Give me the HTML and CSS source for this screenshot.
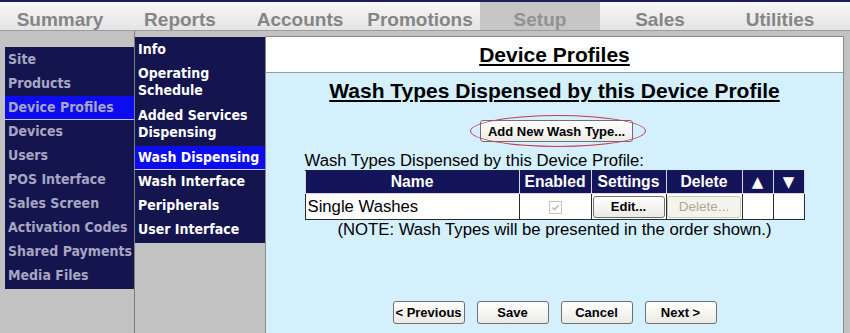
FILE: index.html
```html
<!DOCTYPE html>
<html lang="en">
<head>
  <meta charset="UTF-8" />
  <title>Device Profiles - Setup</title>
<link rel="stylesheet" href="styles.css">
</head>
<body>

<div class="topbar">
  <div class="tab">Summary</div>
  <div class="tab">Reports</div>
  <div class="tab">Accounts</div>
  <div class="tab">Promotions</div>
  <div class="tab active">Setup</div>
  <div class="tab">Sales</div>
  <div class="tab">Utilities</div>
</div>

<div class="page">
  <div class="nav-col">
    <ul class="nav">
      <li>Site</li>
      <li>Products</li>
      <li class="on">Device Profiles</li>
      <li>Devices</li>
      <li>Users</li>
      <li>POS Interface</li>
      <li>Sales Screen</li>
      <li>Activation Codes</li>
      <li>Shared Payments</li>
      <li>Media Files</li>
    </ul>
  </div>

  <div class="sub-col">
    <ul class="nav subnav">
      <li>Info</li>
      <li class="two">Operating<br>Schedule</li>
      <li class="two">Added Services<br>Dispensing</li>
      <li class="on">Wash Dispensing</li>
      <li>Wash Interface</li>
      <li>Peripherals</li>
      <li>User Interface</li>
    </ul>
  </div>

  <div class="main">
    <div class="main-head"><h1>Device Profiles</h1></div>
    <div class="main-body">
      <h2>Wash Types Dispensed by this Device Profile</h2>

      <div class="add-row">
        <span class="add-wrap">
          <button class="btn btn-add">Add New Wash Type...</button>
          <span class="ring"></span>
        </span>
      </div>

      <div class="list">
        <div class="list-label">Wash Types Dispensed by this Device Profile:</div>
        <table class="wash-table">
          <colgroup>
            <col style="width:214px"><col style="width:72px"><col style="width:75px">
            <col style="width:76px"><col style="width:31px"><col style="width:31px">
          </colgroup>
          <thead>
            <tr><th>Name</th><th>Enabled</th><th>Settings</th><th>Delete</th><th class="arrow">&#9650;</th><th class="arrow">&#9660;</th></tr>
          </thead>
          <tbody>
            <tr>
              <td class="name">Single Washes</td>
              <td><span class="chk"><svg width="11" height="11" viewBox="0 0 11 11"><path d="M2.5 5.5 L4.5 7.5 L8.5 3.2" fill="none" stroke="#b9b9b9" stroke-width="1.6"/></svg></span></td>
              <td><button class="btn btn-edit">Edit...</button></td>
              <td><button class="btn btn-off" disabled>Delete...</button></td>
              <td></td>
              <td></td>
            </tr>
          </tbody>
        </table>
      </div>

      <p class="note">(NOTE: Wash Types will be presented in the order shown.)</p>

      <div class="wizard">
        <button class="btn">&lt; Previous</button>
        <button class="btn">Save</button>
        <button class="btn">Cancel</button>
        <button class="btn">Next &gt;</button>
      </div>
    </div>
  </div>
</div>

</body>
</html>
```

FILE: styles.css
```css
:root {
  --navy: #14144e;
  --hilite: #0c0cee;
  --sky: #d4f0fc;
  --frame: #8a8a8a;
}

body {
  margin: 0;
  height: 333px;
  overflow: hidden;
  background: #c2c2c2;
  font-family: "Liberation Sans", Arial, sans-serif;
  color: #000;
}

/* top tabs */
.topbar {
  display: flex;
  height: 31px;
  box-sizing: border-box;
  border-top: 2px solid #1e1e5a;
  border-bottom: 1px solid #9c9c9c;
  background: linear-gradient(#f7f7f7, #e4e4e4);
}

.tab {
  width: 120px;
  box-sizing: border-box;
  padding-top: 7px;
  line-height: 21px;
  text-align: center;
  font-size: 19px;
  font-weight: bold;
  color: #858585;
}

.tab.active {
  background: #c6c6c6;
  color: #929292;
}

/* columns */
.page {
  display: flex;
  height: 302px;
}

.nav-col {
  width: 129px;
  margin-left: 5px;
  padding-top: 16px;
}

.sub-col {
  width: 130px;
  padding-top: 6px;
  border-left: 1px solid #7e7e7e;
}

.nav {
  list-style: none;
  margin: 0;
  padding: 1px 0;
  background: var(--navy);
}

.nav li {
  padding: 3px 0 3px 3px;
  line-height: 17px;
  border-bottom: 1px solid var(--navy);
  font-family: "DejaVu Sans Condensed", "DejaVu Sans", sans-serif;
  font-stretch: condensed;
  font-size: 14px;
  font-weight: bold;
  color: #a6a6c2;
  white-space: nowrap;
}

.nav li.on {
  background: var(--hilite);
  border-bottom-color: #c6c6e6;
}

.subnav li {
  color: #fff;
}

.subnav li.two {
  padding-bottom: 4px;
}

/* main panel */
.main {
  width: 577px;
  margin-top: 5px;
  border: 1px solid var(--frame);
  border-bottom: none;
  background: var(--sky);
}

.main-head {
  height: 35px;
  background: #fff;
  border-bottom: 1px solid #9a9a9a;
}

h1, h2 {
  margin: 0;
  font-size: 21px;
  font-weight: bold;
  text-align: center;
  text-decoration: underline;
  text-decoration-thickness: 2px;
  text-underline-offset: 2px;
}

h1 { line-height: 35px; }

.main-body {
  padding-top: 6px;
  text-align: center;
}

h2 { line-height: 24px; }

.btn {
  height: 23px;
  padding: 0;
  font-family: "Liberation Sans", Arial, sans-serif;
  font-size: 13px;
  font-weight: bold;
  color: #000;
  border: 1px solid #6f6f6f;
  border-radius: 3px;
  background: linear-gradient(#ffffff, #ebeae4);
  white-space: nowrap;
}

.add-row {
  display: flex;
  justify-content: center;
  padding-left: 4px;
  margin-top: 17px;
  height: 22px;
}

.add-wrap {
  position: relative;
  display: block;
}

.btn-add {
  display: block;
  width: 153px;
  height: 22px;
}

.ring {
  position: absolute;
  left: -10px;
  top: -5px;
  width: 176px;
  height: 32px;
  box-sizing: border-box;
  border: 1px solid #c83a56;
  border-radius: 50%;
}

.list {
  width: 500px;
  margin: 10px auto 0;
  text-align: left;
}

.list-label {
  font-size: 16.7px;
  line-height: 18px;
}

.wash-table {
  width: 500px;
  table-layout: fixed;
  border-collapse: collapse;
  border: 1px solid #1c1c4c;
  font-size: 16.7px;
}

.wash-table th {
  height: 22px;
  padding: 0;
  text-align: center;
  background: #14145a;
  color: #fff;
  font-size: 15.7px;
  font-weight: bold;
  border: 1px solid #d6d6e4;
  border-top-color: #1c1c4c;
}

.wash-table th.arrow {
  font-family: "DejaVu Sans", sans-serif;
  font-size: 15px;
  line-height: 15px;
}

.wash-table td {
  height: 25px;
  padding: 0;
  background: #fff;
  text-align: center;
  border: 1px solid #2c2c2c;
}

.wash-table td.name {
  padding-left: 2px;
  text-align: left;
}

.chk {
  display: inline-block;
  width: 11px;
  height: 11px;
  border: 1px solid #c8c5b6;
  background: #fff;
  vertical-align: middle;
}

.chk svg { display: block; }

.btn-edit {
  width: 72px;
  height: 22px;
  vertical-align: middle;
}

.btn-off {
  width: 74px;
  height: 22px;
  vertical-align: middle;
  font-weight: normal;
  font-size: 13.5px;
  color: #aca899;
  border-color: #c9c7ba;
  background: #f5f4ec;
}

.note {
  margin: 0;
  font-size: 16.7px;
  line-height: 19px;
}

.wizard {
  display: flex;
  justify-content: center;
  gap: 12px;
  margin-top: 62px;
}

.wizard .btn {
  width: 72px;
}
```
